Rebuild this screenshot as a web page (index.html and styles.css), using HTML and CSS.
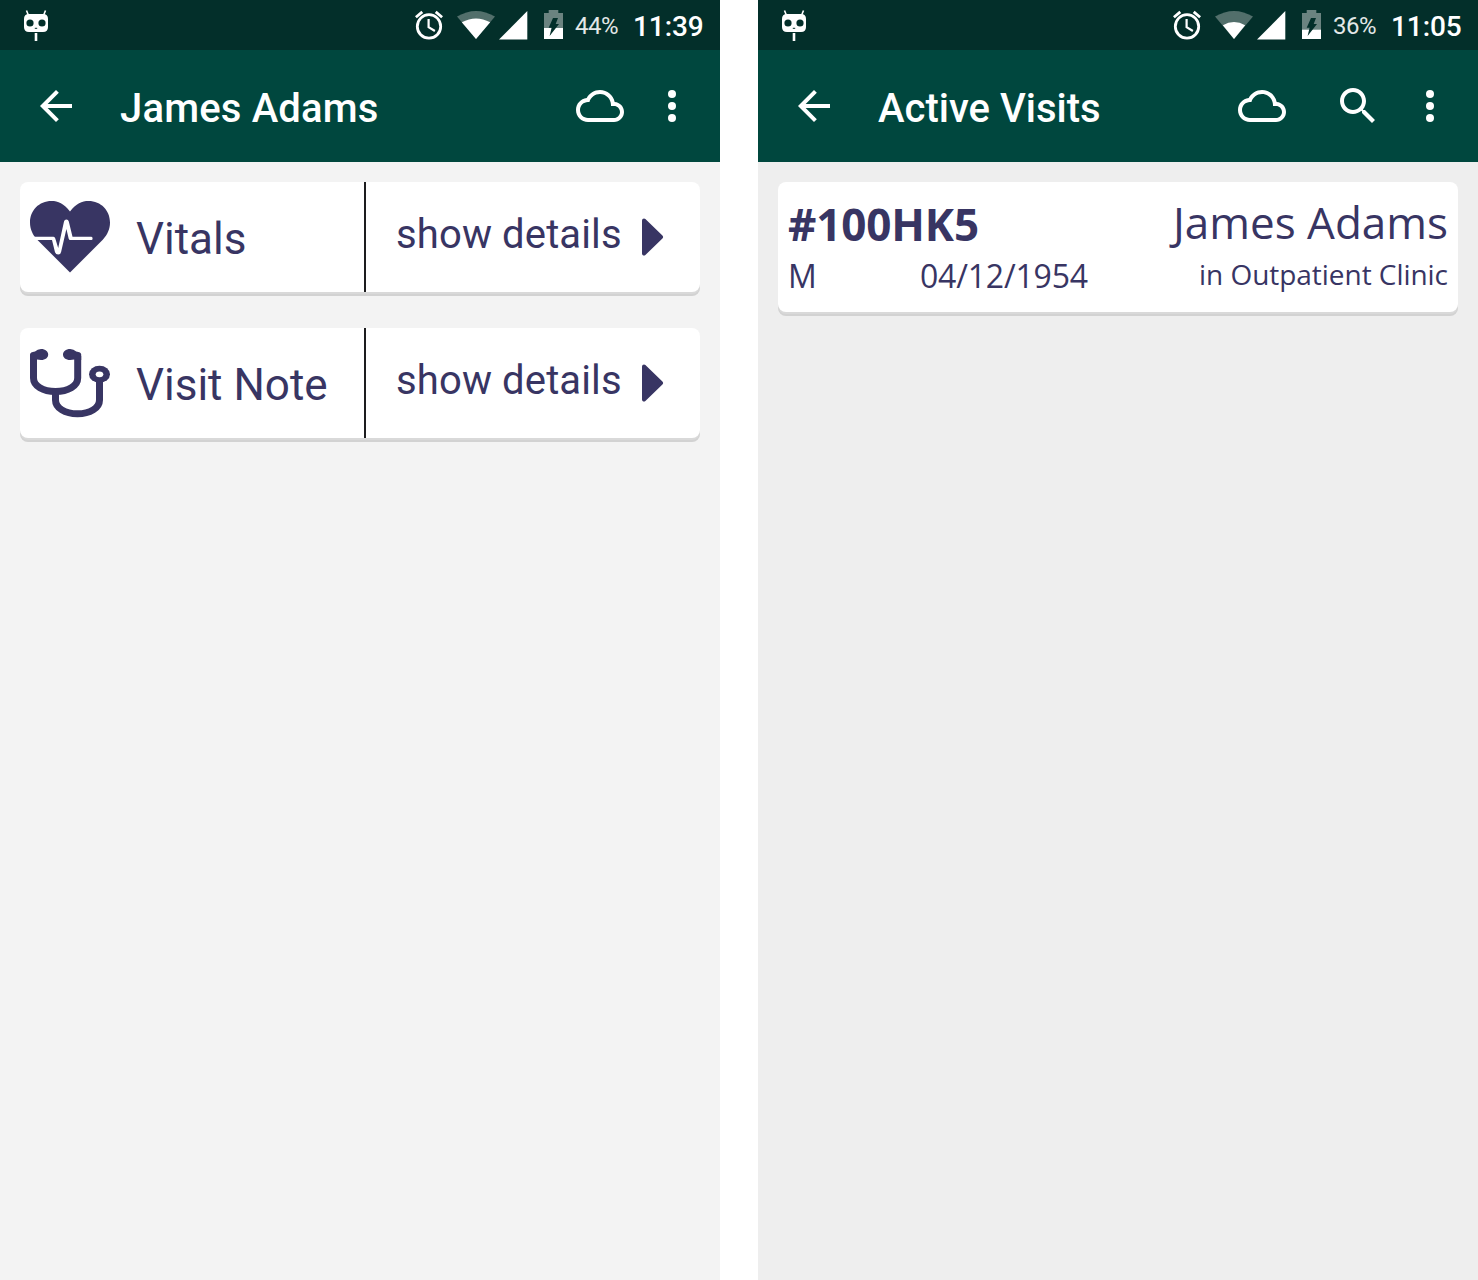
FILE: index.html
```html
<!DOCTYPE html>
<html lang="en">
<head>
<meta charset="utf-8">
<title>Patient visits</title>
<link rel="stylesheet" href="styles.css">
</head>
<body>
<svg class="sprite" aria-hidden="true">
  <symbol id="robot" viewBox="0 0 24 50">
    <path d="M2.500 10.500l2 5M21.500 10.500l-2 5" stroke="#fff" stroke-width="1.600"/>
    <path d="M5 14h14q5 0 5 5v8q0 5-5 5H5q-5 0-5-5v-8q0-5 5-5z" fill="#fff"/>
    <circle cx="6" cy="23" r="3.600" fill="#032f2a"/><circle cx="18" cy="23" r="3.600" fill="#032f2a"/>
    <path d="M10.800 28.300h2.400" stroke="#032f2a" stroke-width="1"/>
    <path d="M12 33v8" stroke="#fff" stroke-width="2.600"/>
  </symbol>
  <symbol id="alarm" viewBox="0 0 28 50">
    <g fill="none" stroke="#fff">
      <circle cx="14" cy="26.400" r="11.700" stroke-width="2.800"/>
      <path d="M.900 17.300l6.400-5.400M27.100 17.300l-6.400-5.400" stroke-width="2.800"/>
      <path d="M13.600 19v8.200l6.300 3.800" stroke-width="2.200"/>
    </g>
  </symbol>
  <symbol id="signal" viewBox="0 0 29 50">
    <path d="M0 39.500L28.300 11v28.500z" fill="#fff"/>
  </symbol>
  <symbol id="arrow" viewBox="0 0 24 24"><path d="M20 11H7.830l5.590-5.590L12 4l-8 8 8 8 1.410-1.410L7.830 13H20v-2z"/></symbol>
  <symbol id="cloud" viewBox="0 0 24 24"><path d="M19.350 10.040C18.670 6.590 15.640 4 12 4 9.110 4 6.600 5.640 5.350 8.040 2.340 8.360 0 10.910 0 14c0 3.310 2.690 6 6 6h13c2.760 0 5-2.240 5-5 0-2.640-2.050-4.780-4.650-4.960zM19 18H6c-2.210 0-4-1.790-4-4s1.790-4 4-4h.710C7.370 7.690 9.480 6 12 6c3.040 0 5.500 2.460 5.500 5.500v.500H19c1.660 0 3 1.340 3 3s-1.340 3-3 3z"/></symbol>
  <symbol id="search" viewBox="0 0 24 24"><path d="M15.500 14h-.790l-.280-.270C15.410 12.590 16 11.110 16 9.500 16 5.910 13.090 3 9.500 3S3 5.910 3 9.500 5.910 16 9.500 16c1.610 0 3.090-.590 4.230-1.570l.270.280v.790l5 4.990L20.490 19l-4.990-5zm-6 0C7.010 14 5 11.990 5 9.500S7.010 5 9.500 5 14 7.010 14 9.500 11.990 14 9.500 14z"/></symbol>
  <symbol id="more" viewBox="0 0 24 24"><circle cx="12" cy="6" r="2"/><circle cx="12" cy="12" r="2"/><circle cx="12" cy="18" r="2"/></symbol>
  <symbol id="play" viewBox="0 0 22 38"><path d="M2 2.500L19 19 2 35.500z" stroke="#383563" stroke-width="4" stroke-linejoin="round" fill="#383563"/></symbol>
</svg>

<div class="screens">
  <section class="screen">
    <div class="status">
      <svg class="robot"><use href="#robot"/></svg>
      <svg class="alarm"><use href="#alarm"/></svg>
      <svg class="wifi" viewBox="0 0 38 50">
        <path d="M0 16.600Q19 5.400 38 16.600L19 39z" fill="#526f6b"/>
        <path d="M4.800 22.300Q19 14.700 33.200 22.300L19 39z" fill="#fff"/>
      </svg>
      <svg class="signal"><use href="#signal"/></svg>
      <svg class="battery" viewBox="0 0 19 50">
        <path d="M0 13h4.700v-3h9.600v3H19v15.500H0z" fill="#6b8380"/>
        <path d="M0 28h19v11H0z" fill="#fff"/>
        <path d="M9 18h5l-2.300 6H15L5.600 36l2-8.200H4.700z" fill="#032f2a"/>
      </svg>
      <span class="percent">44%</span>
      <span class="clock">11:39</span>
    </div>
    <header class="appbar">
      <svg class="action"><use href="#arrow"/></svg>
      <h1 class="person">James Adams</h1>
      <svg class="action"><use href="#cloud"/></svg>
      <svg class="action menu"><use href="#more"/></svg>
    </header>
    <main class="list">
      <article class="card section">
        <div class="name">
          <svg class="pictogram" viewBox="0 0 80 72">
            <path d="M40 10.500C34 2.500 28 0 21.500 0 9 0 0 9.500 0 21.500 0 28 2.500 33.500 7 38.500L40 71.500 73 38.500C77.500 33.500 80 28 80 21.500 80 9.500 71 0 58.500 0 52 0 46 2.500 40 10.500z" fill="#383563"/>
            <path d="M3 35.800h20.500q1.300 0 1.800 1.600l2.900 9.500 5.800-26.500q.5-2 2.400-2 1.900 0 2.400 2l3.700 15.400h18.900q1.200 0 1.200 1.600t-1.200 1.600H40.300q-1.300 0-1.600-1.200L36.400 28 31.100 51q-.5 2.500-2.900 2.500T25 51.200L22 39H6z" fill="#fff"/>
          </svg>
          <h2>Vitals</h2>
        </div>
        <div class="details"><span>show details</span><svg class="play"><use href="#play"/></svg></div>
      </article>
      <article class="card section">
        <div class="name">
          <svg class="pictogram" viewBox="0 -1 80 72">
            <g fill="none" stroke="#383563" stroke-width="7">
              <path d="M3.500 8v22C3.500 38 13 43.500 25.500 43.500S47.700 38 47.700 30V8"/>
              <path d="M25.500 44v8C25.500 60 35 65.800 47.500 65.800S69.500 60 69.500 52V33"/>
            </g>
            <path d="M0 12V6.500q0-2.500 5-3Q7.500 1 11 1c4.500 0 7.200 2.500 7.200 5.500S15.500 12 11 12L7 11.500zM51.200 12V6.500q0-2.500-5-3-2.500-2.500-6-2.500C35.700 1 33 3.500 33 6.500S35.700 12 40.200 12l4-.500z" fill="#383563"/>
            <ellipse cx="69.500" cy="26.300" rx="10.500" ry="8.500" fill="#383563"/>
            <ellipse cx="69.500" cy="26.300" rx="3.800" ry="2.900" fill="#fff"/>
          </svg>
          <h2>Visit Note</h2>
        </div>
        <div class="details"><span>show details</span><svg class="play"><use href="#play"/></svg></div>
      </article>
    </main>
  </section>

  <section class="screen visits">
    <div class="status">
      <svg class="robot"><use href="#robot"/></svg>
      <svg class="alarm"><use href="#alarm"/></svg>
      <svg class="wifi" viewBox="0 0 38 50">
        <path d="M0 16.600Q19 5.400 38 16.600L19 39z" fill="#526f6b"/>
        <path d="M7.800 25.300Q19 18.700 30.200 25.300L19 39z" fill="#fff"/>
      </svg>
      <svg class="signal"><use href="#signal"/></svg>
      <svg class="battery" viewBox="0 0 19 50">
        <path d="M0 13h4.700v-3h9.600v3H19v17H0z" fill="#6b8380"/>
        <path d="M0 29.700h19V39H0z" fill="#fff"/>
        <path d="M9 18h5l-2.300 6H15L5.600 36l2-8.200H4.700z" fill="#032f2a"/>
      </svg>
      <span class="percent">36%</span>
      <span class="clock">11:05</span>
    </div>
    <header class="appbar">
      <svg class="action"><use href="#arrow"/></svg>
      <h1>Active Visits</h1>
      <svg class="action"><use href="#cloud"/></svg>
      <svg class="action search"><use href="#search"/></svg>
      <svg class="action menu"><use href="#more"/></svg>
    </header>
    <main class="list">
      <article class="card visit">
        <div class="row top"><strong>#100HK5</strong><span class="patient">James Adams</span></div>
        <div class="row bottom"><span class="gender">M</span><span class="birth">04/12/1954</span><span class="place">in Outpatient Clinic</span></div>
      </article>
    </main>
  </section>
</div>
</body>
</html>
```
FILE: styles.css
```css
* { box-sizing: border-box; }
body { margin: 0; background: #fff; font-family: Roboto, sans-serif; }
h1, h2 { margin: 0; }
svg { display: block; flex: none; }
.sprite { display: none; }

.screens { display: flex; justify-content: space-between; width: 1478px; height: 1280px; }
.screen { width: 720px; background: #f3f3f3; }
.screen.visits { background: #eee; }

.status { display: flex; height: 50px; padding: 0 16px 0 24px; background: #032f2a; color: #fff; white-space: nowrap; }
.status svg { height: 50px; }
.robot { width: 24px; }
.alarm { width: 28px; margin-left: auto; }
.wifi { width: 38px; margin-left: 14px; }
.signal { width: 29px; margin-left: 4px; }
.battery { width: 19px; margin-left: 16px; }
.percent { width: 43px; margin-left: 12px; font-size: 24px; line-height: 52px; letter-spacing: -0.5px; color: #e3e8e7; }
.clock { width: 71px; margin-left: 15px; font-size: 28px; font-weight: 500; line-height: 53px; letter-spacing: -0.1px; }

.appbar { display: flex; align-items: center; height: 112px; padding: 0 24px 0 32px; background: #00473e; color: #fff; }
.action { width: 48px; height: 48px; fill: #fff; }
.appbar h1 { flex: 1; margin-left: 40px; padding-top: 4px; font-size: 40px; font-weight: 500; white-space: nowrap; }
.appbar .person { letter-spacing: 0.18px; }
.search { margin-left: 48px; }
.menu { margin-left: 24px; }

.list { display: flex; flex-direction: column; gap: 36px; padding: 20px; }
.card { border-radius: 8px; background: #fff; color: #383563; box-shadow: 0 2px 0 #d9d9d9, 0 4px 0 #d2d2d2; white-space: nowrap; }
.section { display: flex; height: 110px; }
.name { display: flex; align-items: center; width: 346px; padding-left: 10px; border-right: 2px solid #1d1d1f; }
.pictogram { width: 80px; height: 72px; }
.name h2 { margin-left: 26px; padding-top: 4px; font-size: 44px; font-weight: 400; }
.details { display: flex; align-items: center; padding-left: 30px; font-size: 40px; letter-spacing: 0.13px; }
.details span { width: 226px; padding-bottom: 5px; }
.play { width: 22px; height: 38px; margin-left: 19.5px; }

.visit { height: 130px; padding: 11px 10px 0; font-family: "Open Sans", "Noto Sans", sans-serif; }
.row { display: flex; justify-content: space-between; }
.top { height: 60px; font-size: 44px; line-height: 60px; }
.top strong { line-height: 62px; letter-spacing: -0.15px; }
.patient { line-height: 58px; }
.bottom { font-size: 32px; line-height: 45px; }
.gender { width: 132px; }
.birth { letter-spacing: -0.2px; }
.place { margin-left: auto; font-size: 28px; line-height: 42px; letter-spacing: -0.04px; }
```
